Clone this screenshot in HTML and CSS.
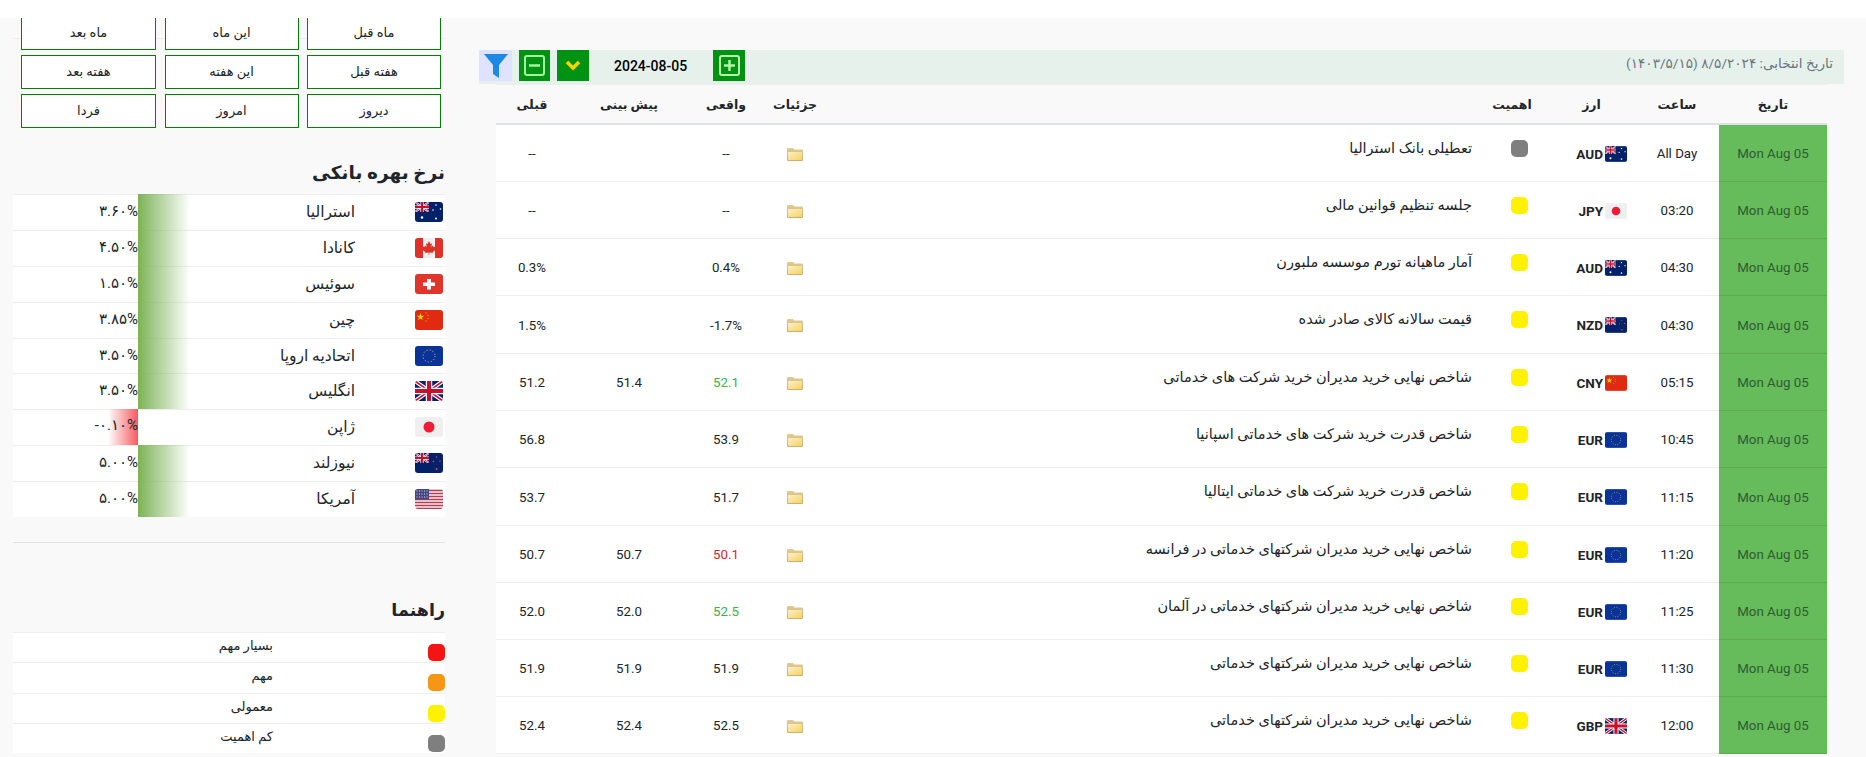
FILE: index.html
```html
<!DOCTYPE html>
<html lang="fa" dir="rtl">
<head>
  <meta charset="UTF-8" />
  <title>تقویم اقتصادی</title>
  <meta name="viewport" content="width=device-width, initial-scale=1.0" />
  <link rel="stylesheet" href="styles.css">
</head>
<body>
  <!-- Flags and small icons, reused below -->
  <svg class="sprite" aria-hidden="true">
    <defs>
      <linearGradient id="folderBack" x1="0" y1="0" x2="0" y2="1">
        <stop offset="0" stop-color="#e0cc92" />
        <stop offset="1" stop-color="#c9b072" />
      </linearGradient>
      <linearGradient id="folderFront" x1="0" y1="0" x2="1" y2="1">
        <stop offset="0" stop-color="#fbf0c8" />
        <stop offset="1" stop-color="#f6d35f" />
      </linearGradient>
    </defs>
    <symbol id="folder" viewBox="0 0 16 13">
      <path d="M1 0h5l1.500 1.500H15a1 1 0 0 1 1 1V12a1 1 0 0 1-1 1H1a1 1 0 0 1-1-1V1a1 1 0 0 1 1-1z" fill="url(#folderBack)" />
      <path d="M1 4h14v8H1z" fill="url(#folderFront)" />
    </symbol>
    <symbol id="f-gb" viewBox="0 0 28 20">
      <rect width="28" height="20" fill="#012169" />
      <path d="M0 0L28 20M28 0L0 20" stroke="#fff" stroke-width="4" />
      <path d="M0 0L28 20M28 0L0 20" stroke="#c8102e" stroke-width="1.600" />
      <path d="M14 0V20M0 10H28" stroke="#fff" stroke-width="6.500" />
      <path d="M14 0V20M0 10H28" stroke="#c8102e" stroke-width="4" />
    </symbol>
    <symbol id="f-au" viewBox="0 0 28 20">
      <rect width="28" height="20" fill="#012169" />
      <use href="#f-gb" width="14" height="10" />
      <circle cx="7" cy="15.500" r="1.300" fill="#fff" />
      <circle cx="21" cy="3" r=".8" fill="#fff" />
      <circle cx="25.500" cy="7" r=".8" fill="#fff" />
      <circle cx="18" cy="8" r=".8" fill="#fff" />
      <circle cx="21" cy="16.500" r="1" fill="#fff" />
    </symbol>
    <symbol id="f-nz" viewBox="0 0 28 20">
      <rect width="28" height="20" fill="#012169" />
      <use href="#f-gb" width="14" height="10" />
      <circle cx="21.500" cy="4" r=".8" fill="#d8465a" />
      <circle cx="25" cy="8" r=".8" fill="#d8465a" />
      <circle cx="18.500" cy="8.500" r=".8" fill="#d8465a" />
      <circle cx="21.500" cy="16" r="1" fill="#d8465a" />
    </symbol>
    <symbol id="f-ca" viewBox="0 0 28 20">
      <rect width="28" height="20" fill="#efefef" />
      <rect width="8" height="20" fill="#de3128" />
      <rect x="20" width="8" height="20" fill="#de3128" />
      <polygon fill="#de3128" points="14,3 15.500,6 17,5.200 16.300,9 18,7.500 18.500,9 20.500,8.700 20,11 21,11.500 17.500,14.200 18,15 14.300,14.600 14.300,17 13.700,17 13.700,14.600 10,15 10.500,14.200 7,11.500 8,11 7.500,8.700 9.500,9 10,7.500 11.700,9 11,5.200 12.500,6" />
    </symbol>
    <symbol id="f-ch" viewBox="0 0 28 20">
      <rect width="28" height="20" fill="#e0352b" />
      <path d="M12 5h4v3.500h4v3.500h-4v3.500h-4V12H8V8.500h4z" fill="#fff" />
    </symbol>
    <symbol id="f-cn" viewBox="0 0 28 20">
      <rect width="28" height="20" fill="#e02a12" />
      <polygon fill="#ffd500" points="5.500,3 6.400,5.700 9.200,5.700 7,7.400 7.800,10 5.500,8.400 3.200,10 4,7.400 1.800,5.700 4.600,5.700" />
      <circle cx="11" cy="3" r=".6" fill="#ffd500" />
      <circle cx="13" cy="5.500" r=".6" fill="#ffd500" />
      <circle cx="13" cy="8.500" r=".6" fill="#ffd500" />
      <circle cx="11" cy="11" r=".6" fill="#ffd500" />
    </symbol>
    <symbol id="f-eu" viewBox="0 0 28 20">
      <rect width="28" height="20" fill="#0a3399" />
      <circle cx="14" cy="10" r="6" fill="none" stroke="#e5c82a" stroke-width="1" stroke-dasharray="1 2.140" />
    </symbol>
    <symbol id="f-jp" viewBox="0 0 28 20">
      <rect width="28" height="20" fill="#efefef" />
      <circle cx="14" cy="10" r="5.500" fill="#ee1c36" />
    </symbol>
    <symbol id="f-us" viewBox="0 0 28 20">
      <rect width="28" height="20" fill="#eef0f4" />
      <path d="M0 1.500H28M0 4.500H28M0 7.500H28M0 10.500H28M0 13.500H28M0 16.500H28M0 19.500H28" stroke="#c1394d" stroke-width="1.500" />
      <rect width="14" height="10.500" fill="#47467f" />
      <path d="M1.500 2H13M1.500 5H13M1.500 8H13" stroke="#d8d8e8" stroke-width="1" stroke-dasharray="1 1.500" />
    </symbol>
  </svg>

  <header class="topbar"></header>

  <div class="page">
    <main class="calendar">
      <div class="toolbar">
        <span class="selected-date">تاریخ انتخابی: ۸/۵/۲۰۲۴ (۱۴۰۳/۵/۱۵)</span>
        <div class="tools" dir="ltr">
          <button class="tool tool-filter" aria-label="filter">
            <svg width="24" height="24" viewBox="0 0 24 24"><path d="M0 0H24L15 11V24L9 20V11z" fill="#1e88e5" /></svg>
          </button>
          <button class="tool" aria-label="collapse">
            <svg width="21" height="21" viewBox="0 0 21 21"><rect x="1" y="1" width="19" height="19" rx="2" fill="none" stroke="#a8f5a0" stroke-width="2" /><path d="M5 10.500H16" stroke="#a8f5a0" stroke-width="2.500" /></svg>
          </button>
          <button class="tool tool-wide" aria-label="open">
            <svg width="16" height="11" viewBox="0 0 16 11"><path d="M2 2L8 8L14 2" fill="none" stroke="#ffd400" stroke-width="3.500" /></svg>
          </button>
          <span class="date-value">2024-08-05</span>
          <button class="tool tool-wide" aria-label="expand">
            <svg width="21" height="21" viewBox="0 0 21 21"><rect x="1" y="1" width="19" height="19" rx="2" fill="none" stroke="#b4f7a6" stroke-width="2" /><path d="M5 10.500H16M10.500 5V16" stroke="#b4f7a6" stroke-width="2.500" /></svg>
          </button>
        </div>
      </div>

      <table class="events">
        <colgroup>
          <col class="c-date"><col class="c-time"><col class="c-cur"><col class="c-imp">
          <col class="c-title"><col class="c-info"><col class="c-actual"><col class="c-fore"><col class="c-prev">
        </colgroup>
        <thead>
          <tr>
            <th>تاریخ</th><th>ساعت</th><th>ارز</th><th>اهمیت</th><th></th>
            <th>جزئیات</th><th>واقعی</th><th>پیش بینی</th><th>قبلی</th>
          </tr>
        </thead>
        <tbody>
          <tr>
            <td class="date">Mon Aug 05</td><td>All Day</td>
            <td class="cur"><svg class="flag-sm"><use href="#f-au" /></svg><b>AUD</b></td>
            <td class="imp"><span class="dot gray"></span></td>
            <td class="title">تعطیلی بانک استرالیا</td>
            <td><svg class="folder"><use href="#folder" /></svg></td>
            <td>--</td><td></td><td>--</td>
          </tr>
          <tr>
            <td class="date">Mon Aug 05</td><td>03:20</td>
            <td class="cur"><svg class="flag-sm"><use href="#f-jp" /></svg><b>JPY</b></td>
            <td class="imp"><span class="dot yellow"></span></td>
            <td class="title">جلسه تنظیم قوانین مالی</td>
            <td><svg class="folder"><use href="#folder" /></svg></td>
            <td>--</td><td></td><td>--</td>
          </tr>
          <tr>
            <td class="date">Mon Aug 05</td><td>04:30</td>
            <td class="cur"><svg class="flag-sm"><use href="#f-au" /></svg><b>AUD</b></td>
            <td class="imp"><span class="dot yellow"></span></td>
            <td class="title">آمار ماهیانه تورم موسسه ملبورن</td>
            <td><svg class="folder"><use href="#folder" /></svg></td>
            <td>0.4%</td><td></td><td>0.3%</td>
          </tr>
          <tr class="tall">
            <td class="date">Mon Aug 05</td><td>04:30</td>
            <td class="cur"><svg class="flag-sm"><use href="#f-nz" /></svg><b>NZD</b></td>
            <td class="imp"><span class="dot yellow"></span></td>
            <td class="title">قیمت سالانه کالای صادر شده</td>
            <td><svg class="folder"><use href="#folder" /></svg></td>
            <td dir="ltr">-1.7%</td><td></td><td>1.5%</td>
          </tr>
          <tr>
            <td class="date">Mon Aug 05</td><td>05:15</td>
            <td class="cur"><svg class="flag-sm"><use href="#f-cn" /></svg><b>CNY</b></td>
            <td class="imp"><span class="dot yellow"></span></td>
            <td class="title">شاخص نهایی خرید مدیران خرید شرکت های خدماتی</td>
            <td><svg class="folder"><use href="#folder" /></svg></td>
            <td class="better">52.1</td><td>51.4</td><td>51.2</td>
          </tr>
          <tr>
            <td class="date">Mon Aug 05</td><td>10:45</td>
            <td class="cur"><svg class="flag-sm"><use href="#f-eu" /></svg><b>EUR</b></td>
            <td class="imp"><span class="dot yellow"></span></td>
            <td class="title">شاخص قدرت خرید شرکت های خدماتی اسپانیا</td>
            <td><svg class="folder"><use href="#folder" /></svg></td>
            <td>53.9</td><td></td><td>56.8</td>
          </tr>
          <tr class="tall">
            <td class="date">Mon Aug 05</td><td>11:15</td>
            <td class="cur"><svg class="flag-sm"><use href="#f-eu" /></svg><b>EUR</b></td>
            <td class="imp"><span class="dot yellow"></span></td>
            <td class="title">شاخص قدرت خرید شرکت های خدماتی ایتالیا</td>
            <td><svg class="folder"><use href="#folder" /></svg></td>
            <td>51.7</td><td></td><td>53.7</td>
          </tr>
          <tr>
            <td class="date">Mon Aug 05</td><td>11:20</td>
            <td class="cur"><svg class="flag-sm"><use href="#f-eu" /></svg><b>EUR</b></td>
            <td class="imp"><span class="dot yellow"></span></td>
            <td class="title">شاخص نهایی خرید مدیران شرکتهای خدماتی در فرانسه</td>
            <td><svg class="folder"><use href="#folder" /></svg></td>
            <td class="worse">50.1</td><td>50.7</td><td>50.7</td>
          </tr>
          <tr>
            <td class="date">Mon Aug 05</td><td>11:25</td>
            <td class="cur"><svg class="flag-sm"><use href="#f-eu" /></svg><b>EUR</b></td>
            <td class="imp"><span class="dot yellow"></span></td>
            <td class="title">شاخص نهایی خرید مدیران شرکتهای خدماتی در آلمان</td>
            <td><svg class="folder"><use href="#folder" /></svg></td>
            <td class="better">52.5</td><td>52.0</td><td>52.0</td>
          </tr>
          <tr>
            <td class="date">Mon Aug 05</td><td>11:30</td>
            <td class="cur"><svg class="flag-sm"><use href="#f-eu" /></svg><b>EUR</b></td>
            <td class="imp"><span class="dot yellow"></span></td>
            <td class="title">شاخص نهایی خرید مدیران شرکتهای خدماتی</td>
            <td><svg class="folder"><use href="#folder" /></svg></td>
            <td>51.9</td><td>51.9</td><td>51.9</td>
          </tr>
          <tr>
            <td class="date">Mon Aug 05</td><td>12:00</td>
            <td class="cur"><svg class="flag-sm"><use href="#f-gb" /></svg><b>GBP</b></td>
            <td class="imp"><span class="dot yellow"></span></td>
            <td class="title">شاخص نهایی خرید مدیران شرکتهای خدماتی</td>
            <td><svg class="folder"><use href="#folder" /></svg></td>
            <td>52.5</td><td>52.4</td><td>52.4</td>
          </tr>
        </tbody>
      </table>
    </main>

    <aside class="sidebar">
      <hr class="rule-behind">
      <div class="quick-dates">
        <button>ماه قبل</button><button>این ماه</button><button>ماه بعد</button>
        <button>هفته قبل</button><button>این هفته</button><button>هفته بعد</button>
        <button>دیروز</button><button>امروز</button><button>فردا</button>
      </div>

      <h2>نرخ بهره بانکی</h2>
      <div class="rates">
        <div class="rate"><svg class="flag"><use href="#f-au" /></svg><span class="name">استرالیا</span><span class="bar up"></span><span class="value" dir="ltr">۳.۶۰%</span></div>
        <div class="rate"><svg class="flag"><use href="#f-ca" /></svg><span class="name">کانادا</span><span class="bar up"></span><span class="value" dir="ltr">۴.۵۰%</span></div>
        <div class="rate"><svg class="flag"><use href="#f-ch" /></svg><span class="name">سوئیس</span><span class="bar up"></span><span class="value" dir="ltr">۱.۵۰%</span></div>
        <div class="rate"><svg class="flag"><use href="#f-cn" /></svg><span class="name">چین</span><span class="bar up"></span><span class="value" dir="ltr">۳.۸۵%</span></div>
        <div class="rate"><svg class="flag"><use href="#f-eu" /></svg><span class="name">اتحادیه اروپا</span><span class="bar up"></span><span class="value" dir="ltr">۳.۵۰%</span></div>
        <div class="rate"><svg class="flag"><use href="#f-gb" /></svg><span class="name">انگلیس</span><span class="bar up"></span><span class="value" dir="ltr">۳.۵۰%</span></div>
        <div class="rate"><svg class="flag"><use href="#f-jp" /></svg><span class="name">ژاپن</span><span class="bar"></span><span class="value down" dir="ltr">-۰.۱۰%</span></div>
        <div class="rate"><svg class="flag"><use href="#f-nz" /></svg><span class="name">نیوزلند</span><span class="bar up"></span><span class="value" dir="ltr">۵.۰۰%</span></div>
        <div class="rate"><svg class="flag"><use href="#f-us" /></svg><span class="name">آمریکا</span><span class="bar up"></span><span class="value" dir="ltr">۵.۰۰%</span></div>
      </div>

      <hr class="rule">

      <h2 class="guide-title">راهنما</h2>
      <div class="guide">
        <div class="guide-row"><span class="dot red"></span><span>بسیار مهم</span></div>
        <div class="guide-row"><span class="dot orange"></span><span>مهم</span></div>
        <div class="guide-row"><span class="dot yellow"></span><span>معمولی</span></div>
        <div class="guide-row"><span class="dot gray"></span><span>کم اهمیت</span></div>
      </div>
    </aside>
  </div>
</body>
</html>
```

FILE: styles.css
```css
* {
  box-sizing: border-box;
}

html,
body {
  height: 757px;
  overflow: hidden;
}

body {
  margin: 0;
  background-color: #f9f9f9;
  color: #212529;
  font-family: Roboto, "DejaVu Sans", sans-serif;
  font-size: 13px;
}

.sprite {
  position: absolute;
  width: 0;
  height: 0;
}

/* white strip fixed over the scrolled page */
.topbar {
  position: fixed;
  top: 0;
  left: 0;
  right: 0;
  height: 18px;
  background-color: #fff;
  z-index: 10;
}

.page {
  display: flex;
  gap: 34px;
  padding-right: 22px;
}

/* Calendar */
.calendar {
  width: 1365px;
  padding-top: 50px;
}

.toolbar {
  display: flex;
  justify-content: space-between;
  height: 34px;
  background-color: #e5f1ea;
}

.selected-date {
  padding: 3px 11px 0 0;
  color: #6c757d;
  font-size: 13.600px;
  line-height: 20px;
}

.tools {
  display: flex;
  align-items: flex-start;
  gap: 7px;
}

.tool {
  display: flex;
  align-items: center;
  justify-content: center;
  width: 31px;
  height: 31px;
  padding: 0;
  border: none;
  background-color: #009212;
}

.tool-wide {
  width: 32px;
}

.tool-filter {
  width: 33px;
  background-color: #dfe3ff;
}

.date-value {
  width: 110px;
  padding: 7px 0 0 18px;
  color: #000;
  font-size: 14px;
  font-weight: 500;
  line-height: 18px;
}

.events {
  width: 1331px;
  margin: 0 17px;
  border-collapse: separate;
  border-spacing: 0;
  table-layout: fixed;
}

.c-date { width: 108px; }
.c-time { width: 84px; }
.c-cur { width: 87px; }
.c-imp { width: 72px; }
.c-title { width: 648px; }
.c-info { width: 66px; }
.c-actual { width: 72px; }
.c-fore { width: 122px; }
.c-prev { width: 72px; }

.events th {
  height: 41px;
  padding: 0;
  border-top: 1px solid #eee;
  border-bottom: 2px solid #dee2e6;
  font-size: 12.500px;
  font-weight: 700;
}

.events td {
  height: 57px;
  padding: 1px 0 0;
  border-bottom: 1px solid #eee;
  background-color: #fff;
  text-align: center;
  font-size: 13.300px;
  font-weight: 400;
  color: #212529;
}

.events .tall td {
  height: 58px;
}

.events td.date {
  background-color: #66bb5a;
  border-bottom-color: #5cab51;
  color: #2f5c33;
}

.events td.cur {
  padding-right: 8px;
  text-align: right;
}

.cur b {
  margin-right: 2px;
  color: #212529;
  font-weight: 700;
  font-size: 13.500px;
  vertical-align: middle;
}

.flag-sm {
  width: 22px;
  height: 16px;
  border-radius: 2px;
  vertical-align: middle;
}

.events td.imp {
  padding: 0 20px 10px 0;
  text-align: right;
}

.events td.title {
  padding: 0 4px 10px 0;
  text-align: right;
  color: #212529;
  font-size: 14.500px;
  font-weight: 400;
}

.folder {
  display: inline-block;
  width: 16px;
  height: 13px;
  vertical-align: middle;
}

.events td.better {
  color: #3fb04a;
}

.events td.worse {
  color: #d9232e;
}

.dot {
  display: block;
  width: 17px;
  height: 17px;
  border-radius: 5px;
}

.gray { background-color: #7f7f7f; }
.yellow { background-color: #fff200; }
.red { background-color: #f51414; }
.orange { background-color: #f59714; }

/* Sidebar */
.sidebar {
  width: 432px;
  padding-top: 38px;
}

.rule-behind {
  margin: 0 0 -23px;
  border: none;
  border-top: 1px solid #eee;
}

.quick-dates {
  display: grid;
  grid-template-columns: 134px 134px 135px;
  grid-auto-rows: 34px;
  gap: 5px 8.500px;
  padding: 0 4px 0 8px;
}

.quick-dates button {
  padding: 0 0 2px;
  border: 1px solid #008000;
  background-color: #fff;
  color: #212529;
  font-family: inherit;
  font-size: 13px;
}

h2 {
  margin: 30px 0 6px;
  font-size: 18.500px;
  font-weight: 700;
  line-height: 30px;
}

.rate {
  display: grid;
  grid-template-columns: 90px 165px 52px 125px;
  align-items: stretch;
  height: 35.900px;
  border-top: 1px solid #eee;
  background-color: #fff;
  font-size: 15.500px;
  line-height: 34px;
}

.flag {
  width: 28px;
  height: 20px;
  margin: 7px 2px 0 0;
  border-radius: 3px;
}

.bar.up {
  margin-top: -1px;
  background: linear-gradient(to right, #7cb356, rgba(124, 179, 86, 0));
}

.value {
  font-size: 15px;
  line-height: 33px;
  text-align: right;
}

.value.down {
  margin-top: -1px;
  background: linear-gradient(to left, #f65a5f, rgba(246, 90, 95, 0)) no-repeat right top / 30px 100%;
}

.rule {
  margin: 25px 0 0;
  border: none;
  border-top: 1px solid #e4e4e4;
}

.guide-title {
  margin: 52px 0 7px;
  font-size: 17.500px;
}

.guide-row {
  display: grid;
  grid-template-columns: 172px auto;
  height: 30.300px;
  border-top: 1px solid #eee;
  background-color: #fff;
  font-size: 13px;
  line-height: 26px;
}

.guide-row .dot {
  margin-top: 11px;
}
```
